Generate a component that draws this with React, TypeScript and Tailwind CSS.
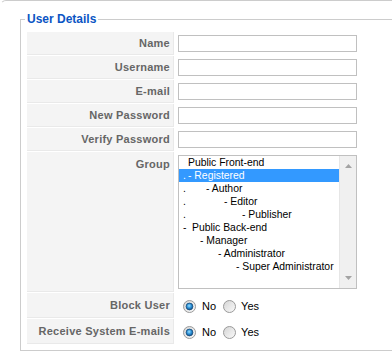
import {useId} from 'react'

type GroupItem = {dot?: string; text: string; indent: string; selected?: boolean}

const textFields = ['Name', 'Username', 'E-mail', 'New Password', 'Verify Password']

const groups: GroupItem[] = [
  {text: 'Public Front-end', indent: 'ml-0'},
  {dot: '.', text: '- Registered', indent: 'ml-0', selected: true},
  {dot: '.', text: '- Author', indent: 'ml-[18px]'},
  {dot: '.', text: '- Editor', indent: 'ml-[36px]'},
  {dot: '.', text: '- Publisher', indent: 'ml-[54px]'},
  {dot: '-', text: 'Public Back-end', indent: 'ml-[4px]'},
  {text: '- Manager', indent: 'ml-[12px]'},
  {text: '- Administrator', indent: 'ml-[30px]'},
  {text: '- Super Administrator', indent: 'ml-[48px]'},
]

function Radio({checked}: {checked: boolean}) {
  const id = useId().replace(/:/g, '')
  return (
    <svg width="13" height="13" viewBox="0 0 13 13" className="shrink-0">
      <defs>
        <linearGradient id={`ring${id}`} x1="0" y1="0" x2="1" y2="1">
          <stop offset="0" stopColor="#d4d4d4" />
          <stop offset="1" stopColor="#fbfbfb" />
        </linearGradient>
        <radialGradient id={`dot${id}`} cx="0.45" cy="0.4" r="0.6">
          <stop offset="0" stopColor="#9be0ff" />
          <stop offset="0.55" stopColor="#2a8fd6" />
          <stop offset="1" stopColor="#124f86" />
        </radialGradient>
      </defs>
      <circle cx="6.5" cy="6.5" r="6" fill={`url(#ring${id})`} stroke="#9a9a9a" strokeWidth="1" />
      {checked && <circle cx="6.5" cy="6.5" r="3.4" fill={`url(#dot${id})`} stroke="#1b4f7e" strokeWidth="0.8" />}
    </svg>
  )
}

function Label({children, top}: {children: string; top?: boolean}) {
  return (
    <div
      className={`flex w-[147px] shrink-0 justify-end border-r border-b border-[#e9e9e9] bg-[#f4f4f4] pr-[3px] font-bold tracking-[0.25px] text-[#666666] ${
        top ? 'items-start pt-[4px]' : 'items-center'
      }`}
    >
      {children}
    </div>
  )
}

function YesNo() {
  return (
    <div className="flex items-center pl-[9px] pt-[1px] text-black">
      <Radio checked />
      <span className="ml-[6px]">No</span>
      <span className="ml-[7px]">
        <Radio checked={false} />
      </span>
      <span className="ml-[5px]">Yes</span>
    </div>
  )
}

export default function App() {
  return (
    <div className="min-h-[359px] overflow-hidden bg-white font-['Liberation_Sans',Arial,sans-serif] text-[11px]">
      <div className="rounded-tl-[6px] border-t border-l border-t-[#cccccc] border-l-transparent pt-[11px] pl-[19px]">
        <fieldset className="w-[400px] border border-[#cccccc] pt-[6px] pb-[6px] pl-[6px]">
          <legend className="ml-[-2px] px-[2px] text-[12px] leading-[14px] font-bold text-[#0b55c4]">User Details</legend>

          <div className="flex flex-col gap-[1px]">
            {textFields.map((f) => (
              <div key={f} className="flex h-[23px]">
                <Label>{f}</Label>
                <div className="pl-[4px] pt-[3px]">
                  <input
                    type={f.includes('Password') ? 'password' : 'text'}
                    className="block h-[17px] w-[179px] border border-[#c0c0c0] bg-white outline-none"
                  />
                </div>
              </div>
            ))}

            <div className="flex h-[140px]">
              <Label top>Group</Label>
              <div className="pl-[4px] pt-[3px]">
                <div className="flex h-[134px] w-[179px] border border-[#c0c0c0] bg-white text-[10.4px] text-black">
                  <div className="w-[160px]">
                    {groups.map((g) => (
                      <div
                        key={g.text}
                        className={`flex h-[13px] items-center whitespace-nowrap ${g.selected ? 'bg-[#3399ff] text-white' : ''}`}
                      >
                        <span className="w-[9px] shrink-0 pl-[4px]">{g.dot}</span>
                        <span className={g.indent}>{g.text}</span>
                      </div>
                    ))}
                  </div>
                  <div className="flex w-[17px] flex-col items-center justify-between border-l border-[#e6e6e6] bg-[#f0f0f0] py-[8px]">
                    <svg width="7" height="4" viewBox="0 0 7 4">
                      <path d="M3.5 0 L7 4 L0 4 Z" fill="#a3a3a3" />
                    </svg>
                    <svg width="7" height="4" viewBox="0 0 7 4">
                      <path d="M0 0 L7 0 L3.5 4 Z" fill="#a3a3a3" />
                    </svg>
                  </div>
                </div>
              </div>
            </div>

            <div className="flex h-[25px]">
              <Label>Block User</Label>
              <YesNo />
            </div>
            <div className="flex h-[25px]">
              <Label>Receive System E-mails</Label>
              <YesNo />
            </div>
          </div>
        </fieldset>
      </div>
    </div>
  )
}
